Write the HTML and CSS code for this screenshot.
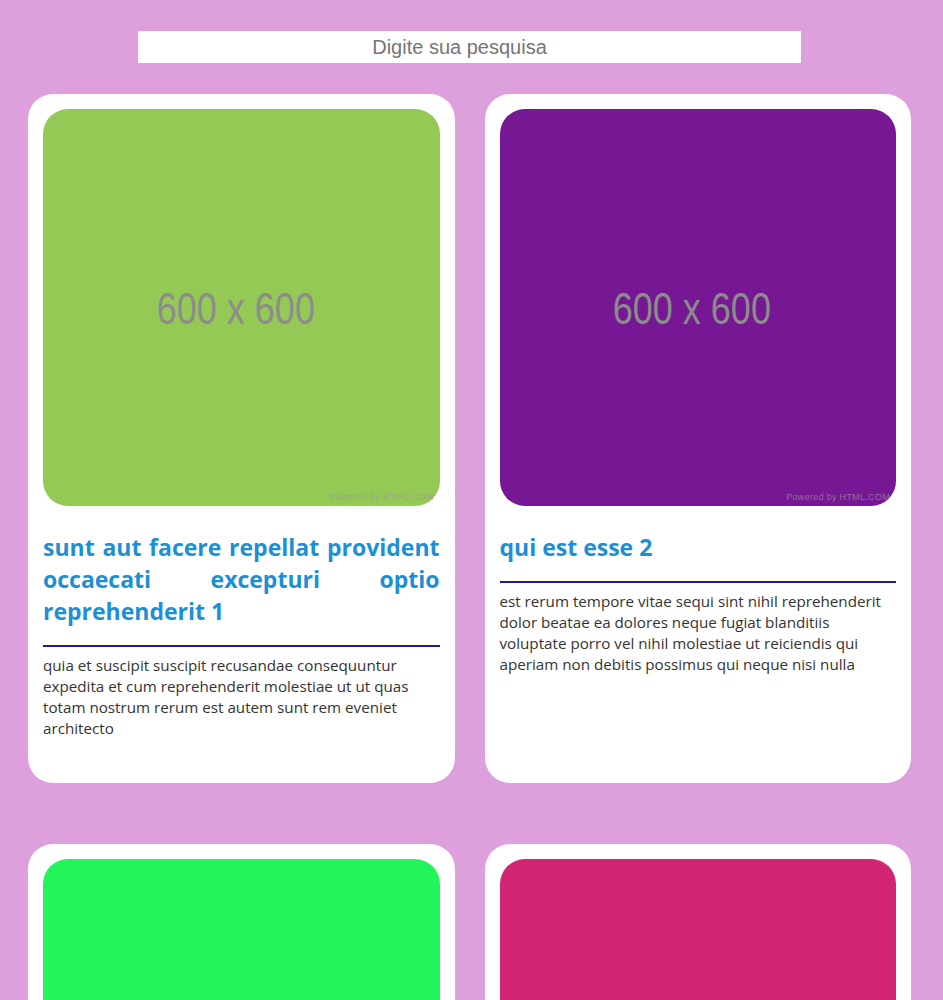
FILE: index.html
```html
<!DOCTYPE html>
<html lang="pt-BR">
<head>
<meta charset="utf-8">
<title>Posts</title>
<link rel="stylesheet" href="styles.css">
</head>
<body>
<div class="page">
  <div class="search-row">
    <input class="search" type="text" placeholder="Digite sua pesquisa">
  </div>
  <div class="grid">
    <div class="card">
      <div class="thumb thumb-green"><span class="thumb-label">600 x 600</span><span class="powered">Powered by HTML.COM</span></div>
      <h2 class="title">sunt aut facere repellat provident occaecati excepturi optio reprehenderit 1</h2>
      <div class="rule"></div>
      <p class="body">quia et suscipit suscipit recusandae consequuntur expedita et cum reprehenderit molestiae ut ut quas totam nostrum rerum est autem sunt rem eveniet architecto</p>
    </div>
    <div class="card">
      <div class="thumb thumb-purple"><span class="thumb-label">600 x 600</span><span class="powered">Powered by HTML.COM</span></div>
      <h2 class="title">qui est esse 2</h2>
      <div class="rule"></div>
      <p class="body">est rerum tempore vitae sequi sint nihil reprehenderit dolor beatae ea dolores neque fugiat blanditiis voluptate porro vel nihil molestiae ut reiciendis qui aperiam non debitis possimus qui neque nisi nulla</p>
    </div>
    <div class="card">
      <div class="thumb thumb-lime"><span class="thumb-label">600 x 600</span><span class="powered">Powered by HTML.COM</span></div>
      <h2 class="title">ea molestias quasi exercitationem repellat qui ipsa sit aut 3</h2>
      <div class="rule"></div>
      <p class="body">et iusto sed quo iure voluptatem occaecati omnis eligendi aut ad voluptatem doloribus vel accusantium quis pariatur molestiae porro eius odio et labore et velit aut</p>
    </div>
    <div class="card">
      <div class="thumb thumb-pink"><span class="thumb-label">600 x 600</span><span class="powered">Powered by HTML.COM</span></div>
      <h2 class="title">eum et est occaecati 4</h2>
      <div class="rule"></div>
      <p class="body">ullam et saepe reiciendis voluptatem adipisci sit amet autem assumenda provident rerum culpa quis hic commodi nesciunt rem tenetur doloremque ipsam iure quis sunt voluptatem rerum illo velit</p>
    </div>
  </div>
</div>
</body>
</html>
```

FILE: styles.css
```css
html, body {
  margin: 0;
  padding: 0;
  background: #dda0dd;
}

body {
  font-family: "Open Sans", "Noto Sans", sans-serif;
}

.page {
  padding: 31px 32px 40px 28px;
}

.search-row {
  display: flex;
  justify-content: center;
}

.search {
  width: 663px;
  height: 32px;
  box-sizing: border-box;
  border: none;
  outline: none;
  background: #ffffff;
  padding: 0 20px 0 0;
  text-align: center;
  font-family: "Liberation Sans", Arial, sans-serif;
  font-size: 20px;
  color: #333;
}

.search::placeholder {
  color: #757575;
}

.grid {
  margin-top: 31px;
  display: grid;
  grid-template-columns: 1fr 1fr;
  gap: 61px 30px;
}

.card {
  background: #ffffff;
  border-radius: 25px;
  padding: 15px 15px 44px;
}

.thumb {
  position: relative;
  aspect-ratio: 1 / 1;
  border-radius: 25px;
  display: flex;
  align-items: center;
  justify-content: center;
  padding-right: 11px;
  padding-top: 3px;
  box-sizing: border-box;
}

.thumb-green { background: #94c955; }
.thumb-purple { background: #761893; }
.thumb-lime { background: #22f55a; }
.thumb-pink { background: #d22573; }

.thumb-label {
  font-family: "Liberation Sans", Arial, sans-serif;
  font-size: 45px;
  color: #8c8c8c;
  transform: scaleX(0.8);
  white-space: nowrap;
}

.powered {
  position: absolute;
  right: 6px;
  bottom: 4px;
  font-family: "Liberation Sans", Arial, sans-serif;
  font-size: 9px;
  color: rgba(153, 153, 153, 0.7);
  letter-spacing: 0.3px;
}

.title {
  margin: 25px 0 0;
  font-size: 23px;
  line-height: 32px;
  font-weight: 700;
  color: #1c8fd5;
  text-align: justify;
}

.rule {
  margin-top: 18px;
  border-top: 2px solid #2a1696;
}

.body {
  margin: 8px 0 0;
  font-size: 15.2px;
  line-height: 21px;
  color: #333333;
}
```
